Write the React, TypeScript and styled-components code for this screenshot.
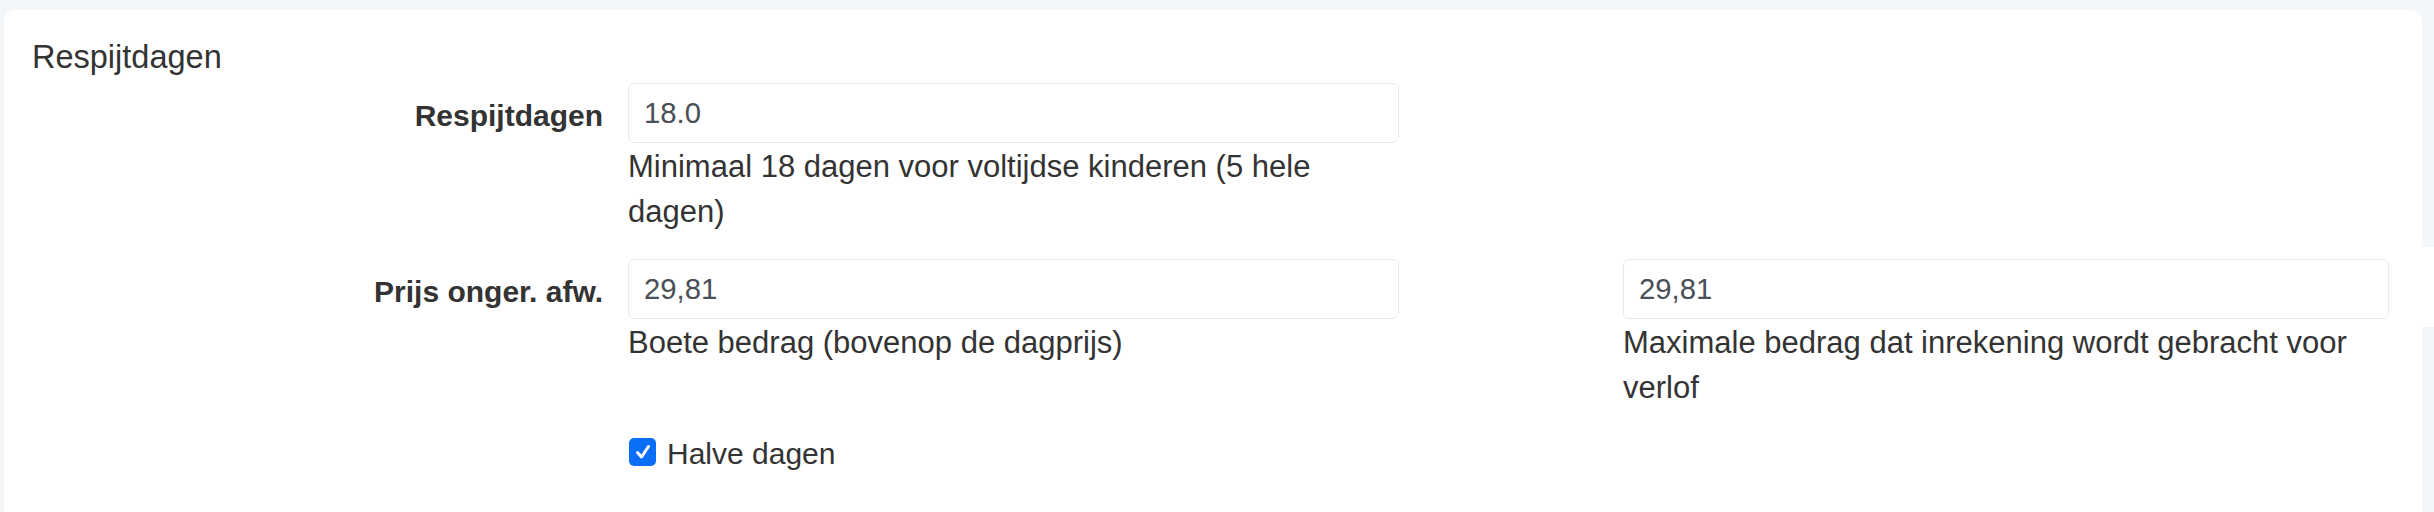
import React from 'react';
import styled, { createGlobalStyle } from 'styled-components';

const GlobalStyle = createGlobalStyle`
  html, body {
    margin: 0;
    padding: 0;
    background: #f3f7fa;
    font-family: "Liberation Sans", Arial, Helvetica, sans-serif;
    color: #333333;
  }
`;

const Page = styled.div`
  display: flex;
  height: 512px;
  overflow: hidden;
`;

const Card = styled.section`
  flex: 1;
  margin: 10px 0 0 4px;
  padding: 28px 0 0 28px;
  background: #ffffff;
  border-radius: 11px 11px 0 0;
`;

const Gutter = styled.div`
  width: 12px;
  display: flex;
  flex-direction: column;
`;

const GutterPiece = styled.div<{ $height?: number; $white?: boolean }>`
  height: ${(p) => (p.$height ? `${p.$height}px` : 'auto')};
  flex: ${(p) => (p.$height ? '0 0 auto' : '1')};
  background: ${(p) => (p.$white ? '#ffffff' : '#f3f7fa')};
`;

const Heading = styled.h5`
  margin: 0;
  font-size: 32.5px;
  line-height: 39px;
  font-weight: 400;
  color: #333333;
`;

const FormRow = styled.div<{ $top: number }>`
  display: grid;
  grid-template-columns: 596px 771px 990px;
  align-items: start;
  margin-top: ${(p) => p.$top}px;
`;

const Label = styled.label`
  padding: 10px 25px 0 0;
  text-align: right;
  font-size: 30px;
  line-height: 45px;
  font-weight: 700;
  color: #333333;
  white-space: nowrap;
`;

const Field = styled.div<{ $inset?: number }>`
  padding-left: ${(p) => p.$inset || 0}px;
  width: ${(p) => (p.$inset ? '766px' : 'auto')};
`;

const Input = styled.input`
  display: block;
  box-sizing: border-box;
  width: 100%;
  height: 60px;
  margin: 0;
  padding: 0 15px;
  border: 1.5px solid #e8e9ea;
  border-radius: 6px;
  background: #ffffff;
  font-family: inherit;
  font-size: 29.3px;
  color: #495057;
  outline: none;
`;

const Help = styled.small`
  display: block;
  margin-top: 1px;
  font-size: 31px;
  line-height: 45px;
  color: #333333;
`;

const CheckRow = styled.label`
  display: flex;
  align-items: flex-start;
  margin: 21px 0 0 596px;
  font-size: 30px;
  line-height: 45px;
  color: #333333;
`;

const CheckBox = styled.span`
  display: inline-flex;
  align-items: center;
  justify-content: center;
  width: 27px;
  height: 28px;
  margin: 7px 11px 0 1px;
  border-radius: 5px;
  background: #0b6ef6;
`;

const rows = [
  {
    label: 'Respijtdagen',
    fields: [
      {
        value: '18.0',
        help: 'Minimaal 18 dagen voor voltijdse kinderen (5 hele dagen)',
      },
    ],
  },
  {
    label: 'Prijs onger. afw.',
    fields: [
      { value: '29,81', help: 'Boete bedrag (bovenop de dagprijs)' },
      {
        value: '29,81',
        help: 'Maximale bedrag dat inrekening wordt gebracht voor verlof',
      },
    ],
  },
];

const App = () => {
  return (
    <>
      <GlobalStyle />
      <Page>
        <Card>
          <Heading>Respijtdagen</Heading>
          {rows.map((row, i) => (
            <FormRow key={row.label} $top={i === 0 ? 6 : 25}>
              <Label>{row.label}</Label>
              {row.fields.map((field, j) => (
                <Field key={j} $inset={j > 0 ? 224 : 0}>
                  <Input type="text" defaultValue={field.value} />
                  <Help>{field.help}</Help>
                </Field>
              ))}
            </FormRow>
          ))}
          <CheckRow>
            <CheckBox>
              <svg width="18" height="18" viewBox="0 0 18 18">
                <path
                  d="M3.5 9.5 L7.5 14 L14.5 3.5"
                  fill="none"
                  stroke="#ffffff"
                  strokeWidth="3"
                  strokeLinecap="round"
                  strokeLinejoin="round"
                />
              </svg>
            </CheckBox>
            Halve dagen
          </CheckRow>
        </Card>
        <Gutter>
          <GutterPiece $height={247} />
          <GutterPiece $height={80} $white />
          <GutterPiece />
        </Gutter>
      </Page>
    </>
  );
};

export default App;
